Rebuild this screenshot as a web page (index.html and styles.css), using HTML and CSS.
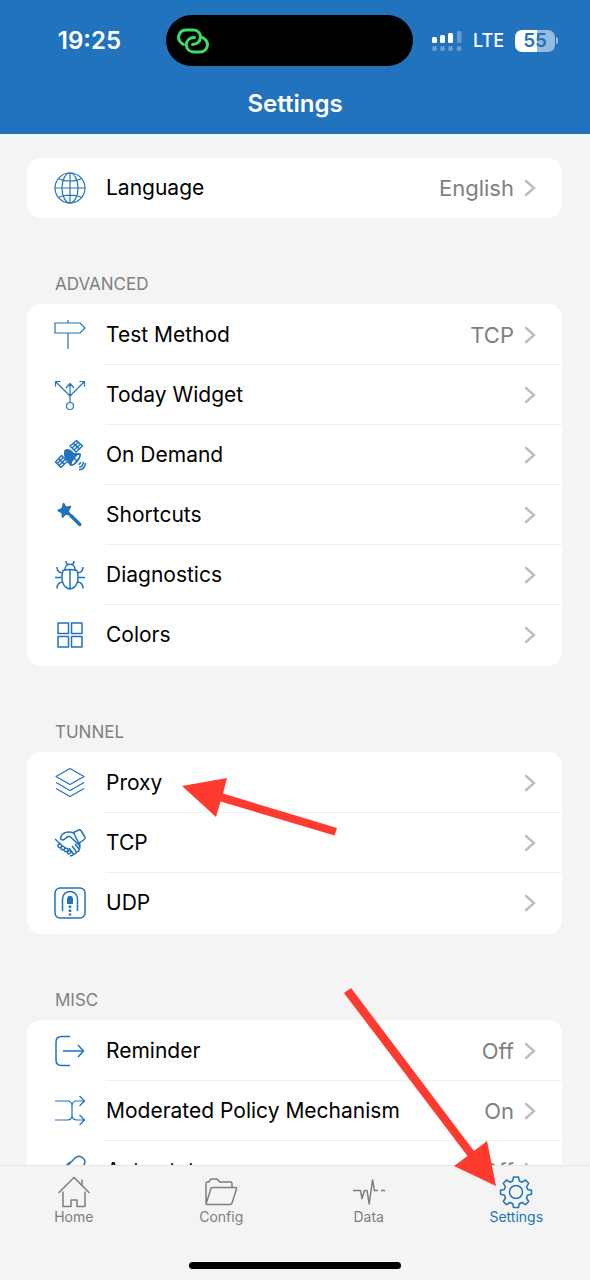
FILE: index.html
```html
<!DOCTYPE html>
<html lang="en">
<head>
<meta charset="utf-8">
<meta name="viewport" content="width=device-width, initial-scale=1">
<title>Settings</title>
<link rel="stylesheet" href="styles.css">
</head>
<body>
<svg class="defs" aria-hidden="true">
  <symbol id="chevron" viewBox="0 0 12 18"><path d="M2 2l8 7-8 7"/></symbol>
</svg>
<div class="app">
  <header class="header">
    <div class="status">
      <span class="time">19:25</span>
      <div class="island">
        <svg class="link-icon" viewBox="0 0 32 26"><path d="M6.500 16.500C2.500 14 0.500 10.500 2.200 6.500C3.500 3 6.500 2 9.500 2H16C20.500 2 23.500 5 23.500 9C23.500 13.500 20 16.500 15.500 16.500"/><path d="M25.500 9.500C29.500 12 31.500 15.500 29.800 19.500C28.500 23 25.500 24 22.500 24H17C12.500 24 9.300 21 9.300 17C9.300 12.500 12.500 9.500 17.500 9.500"/></svg>
      </div>
      <div class="signals">
        <svg class="bars" viewBox="0 0 30 22"><g fill="#fff"><rect x="0" y="7" width="5" height="6" rx="1.500"/><rect x="8" y="5" width="5" height="8" rx="1.500"/><rect x="16" y="3" width="5" height="10" rx="1.500"/></g><g fill="#fff" opacity=".3"><rect x="25" y="1" width="4.500" height="12" rx="1.500"/><circle cx="2.500" cy="18.500" r="2.500"/><circle cx="10.500" cy="18.500" r="2.500"/><circle cx="18.500" cy="18.500" r="2.500"/><circle cx="27" cy="18.500" r="2.500"/></g></svg>
        <span class="network">LTE</span>
        <span class="battery"><span class="battery-level">55</span></span>
      </div>
    </div>
    <h1 class="title">Settings</h1>
  </header>

  <main class="content">
    <ul class="card card-single">
      <li class="row"><a class="row-link" href="#">
        <svg class="icon thin" viewBox="0 0 32 32"><circle cx="16" cy="16" r="15"/><ellipse cx="16" cy="16" rx="8" ry="15"/><path d="M16 1v30M1 16h30M4.500 6.500C10 9.800 22 9.800 27.500 6.500M4.500 25.500C10 22.200 22 22.200 27.500 25.500"/></svg>
        <span class="row-body"><span class="label">Language</span><span class="value">English</span><svg class="chevron"><use href="#chevron"/></svg></span></a></li>
    </ul>

    <h2 class="section-title">ADVANCED</h2>
    <ul class="card">
      <li class="row"><a class="row-link" href="#">
        <svg class="icon thin" viewBox="0 0 32 32"><path d="M1 4h25l5 5-5 5H1zM14 1v3M14 14v16"/></svg>
        <span class="row-body"><span class="label">Test Method</span><span class="value">TCP</span><svg class="chevron"><use href="#chevron"/></svg></span></a></li>
      <li class="row"><a class="row-link" href="#">
        <svg class="icon thin" viewBox="0 0 32 32"><path d="M16 23V5M12 9l4-4.500L20 9M16 17L1.500 2.500M1.500 7.500v-5h5M16 17L30.500 2.500M25.500 2.500h5v5"/><circle cx="16" cy="27" r="3.500"/></svg>
        <span class="row-body"><span class="label">Today Widget</span><svg class="chevron"><use href="#chevron"/></svg></span></a></li>
      <li class="row"><a class="row-link" href="#">
        <svg class="icon" viewBox="0 0 32 32"><path d="M16 7l6.500-5.500 6 5.500-6.500 6zM19.300 4.300l6 5.600M18 9l6-5.800M20 11l6.400-6M1.500 23l6-6.500 6 5.500-6.500 6.500zM4.500 19.700l6 5.600M3.300 24.800l6-6.500M5.200 26.500l6.300-6.500"/><path d="M10.500 11C14 8.500 17.500 11 20 14L26.800 14.300C27.500 19.500 22.500 26.500 16.500 27C12 22 8.500 16.500 10.500 11z" fill="currentColor" stroke="none"/><ellipse cx="21.500" cy="20.500" rx="2" ry="6.500" transform="rotate(38 21.500 20.500)" fill="#fff"/><path d="M20 19l3 3M24.500 25.500q2-.5 2-2.500M25 28.300q4-.5 4.300-5.300M25 30.800q6-.5 6.300-6.800"/></svg>
        <span class="row-body"><span class="label">On Demand</span><svg class="chevron"><use href="#chevron"/></svg></span></a></li>
      <li class="row"><a class="row-link" href="#">
        <svg class="icon" viewBox="0 0 32 32"><path d="M9.500 4.500l2.500 4 4.500-1-2.300 4.500 2.300 4-4.800-1-3.200 3.200-.5-4.700-4-2 4.200-2z" fill="currentColor"/><path d="M16.800 16.500l9 9" stroke-width="3.500" stroke-linecap="round"/></svg>
        <span class="row-body"><span class="label">Shortcuts</span><svg class="chevron"><use href="#chevron"/></svg></span></a></li>
      <li class="row"><a class="row-link" href="#">
        <svg class="icon" viewBox="0 0 32 32"><path d="M11 10.500C11 3.500 21 3.500 21 10.500M9 11.500Q16 9.500 23 11.500C25.500 20 23.500 29 16 30C8.500 29 6.500 20 9 11.500zM16 11v19M12 2q0 3.500 2.500 3.500M20 2q0 3.500-2.500 3.500M8.500 14Q3 13.500 3 8M23.500 14Q29 13.500 29 8M1 18.500h6.500M24.500 18.500H31M8.500 23Q3 23.500 3 29.500M23.500 23Q29 23.500 29 29.500"/></svg>
        <span class="row-body"><span class="label">Diagnostics</span><svg class="chevron"><use href="#chevron"/></svg></span></a></li>
      <li class="row"><a class="row-link" href="#">
        <svg class="icon" viewBox="0 0 32 32"><path d="M4 4h10.500v10.500H4zM17.500 4H28v10.500H17.500zM4 17.500h10.500V28H4zM17.500 17.500H28V28H17.500z"/></svg>
        <span class="row-body"><span class="label">Colors</span><svg class="chevron"><use href="#chevron"/></svg></span></a></li>
    </ul>

    <h2 class="section-title">TUNNEL</h2>
    <ul class="card">
      <li class="row"><a class="row-link" href="#">
        <svg class="icon thin" viewBox="0 0 32 32"><path d="M16 1.500l14 8-14 8-14-8zM2 15.500l14 8 14-8M2 21.500l14 8 14-8"/></svg>
        <span class="row-body"><span class="label">Proxy</span><svg class="chevron"><use href="#chevron"/></svg></span></a>
        <svg class="arrow arrow-proxy" viewBox="0 0 156 58"><path d="M0 8L45 0l-4 15.500 114 34.500-2.500 7.500L38.500 23.500 34 39z"/></svg>
      </li>
      <li class="row"><a class="row-link" href="#">
        <svg class="icon" viewBox="0 0 32 32"><path d="M19.500 5.500l2-1 3.500-1.500q1.500-.5 2.300 1l3.500 6q.7 1.500-.6 2.500L26 15.500q-1.300.6-2-.7zM19.500 6Q16 4.500 11.500 5.500Q6.500 7.500 6.500 12Q9 14 11.500 11.500Q13 9 16 9.500L25.500 18.500M25 15.500Q27 18.500 25 20M1 12l5.500 5M5.500 17q-2.500 1-1 3 1.500 1.500 3-.5.5-2.500-2-2.500zM8.500 19q-2.500 1.500-1 3.500 2 1 3-1 .5-2-2-2.500zM11.500 21q-2.500 2-.5 3.500 2 .8 3-1.500 0-2-2.500-2zM14.500 24q-2 2 0 3 1.500 0 2.500-2 0-1.500-2.500-1zM16 28.500q2.500 1 3.500-1.500 2.500.5 3-2 3-.5 2.500-3 1.500-1.200.5-3M15 21l4.500 6M18 19l4.500 6M21 17l4 5"/></svg>
        <span class="row-body"><span class="label">TCP</span><svg class="chevron"><use href="#chevron"/></svg></span></a></li>
      <li class="row"><a class="row-link" href="#">
        <svg class="icon" viewBox="0 0 32 32"><rect x="1" y="1" width="30" height="30" rx="5"/><path d="M8.500 24V12C8.500 2 23.500 2 23.500 12V24"/><path d="M13 17v-5C13 7.500 19 7.500 19 12v5z" fill="currentColor" stroke="none"/><path d="M16 18.500v10" stroke-width="2.500" stroke-dasharray="2.500 1.500"/></svg>
        <span class="row-body"><span class="label">UDP</span><svg class="chevron"><use href="#chevron"/></svg></span></a></li>
    </ul>

    <h2 class="section-title">MISC</h2>
    <ul class="card">
      <li class="row"><a class="row-link" href="#">
        <svg class="icon" viewBox="0 0 32 32"><path d="M16 1.500H7.500Q2 1.500 2 7v18q0 5.500 5.500 5.500H16M9 16h20.500M24 10l5.500 6-5.500 6"/></svg>
        <span class="row-body"><span class="label">Reminder</span><span class="value">Off</span><svg class="chevron"><use href="#chevron"/></svg></span></a></li>
      <li class="row"><a class="row-link" href="#">
        <svg class="icon thin" viewBox="0 0 32 32"><path d="M1 6h12.500q4.500 0 4.500 5v9q0 5-4.500 5H1M30.500 6H23q-5 0-5 5v9q0 5 5 5h7.500M25.500 1l5 5-5 5M25.500 20l5 5-5 5"/></svg>
        <span class="row-body"><span class="label">Moderated Policy Mechanism</span><span class="value">On</span><svg class="chevron"><use href="#chevron"/></svg></span></a></li>
      <li class="row"><a class="row-link" href="#">
        <svg class="icon" viewBox="0 0 32 32"><path d="M8 16.500L21 3Q25 -.5 29 3t0 8L14 27q-5 4-9.500 0t0-9L16 7"/></svg>
        <span class="row-body"><span class="label">Auto state</span><span class="value">Off</span><svg class="chevron"><use href="#chevron"/></svg></span></a></li>
    </ul>
  </main>

  <footer class="footer">
    <nav class="tabs">
      <a class="tab" href="#"><svg class="tab-icon" viewBox="0 0 32 32"><path d="M0.500 17L16 1.500 31.500 17M5 15.500V30.500H13V24h6v6.500h8V15.500M24 9V3.500"/></svg>Home</a>
      <a class="tab" href="#"><svg class="tab-icon" viewBox="0 0 32 32"><path d="M1 28V7.500q0-1.500 1.500-1.500H4q1-3 3-3h4q2 0 3.500 3h11Q27 6 27 7.500V11M1 28L6 12.500Q6.500 11.500 8 11.500h22.500q1.500 0 1 1.500l-4.500 14q-.5 1.500-2 1.500H2.500Q1 28.500 1 28z"/></svg>Config</a>
      <a class="tab" href="#"><svg class="tab-icon" viewBox="0 0 32 32"><path d="M0 14.500h7.500l1.500 8 2.500-8H14l2.200 13.500L19.500 4l2 10.500H25M28 14.500h4"/></svg>Data</a>
      <a class="tab tab-active" href="#" aria-current="page"><svg class="tab-icon" viewBox="0 0 32 32"><circle cx="16" cy="16" r="6.500"/><path d="M13.500 1h5l.8 4 2.700 1.200 3.500-2.200 3.200 3.300-2.200 3.500 1.200 2.700 3.800.8v4l-3.800.8-1.200 2.900 2.200 3.500-3.200 3.200-3.500-2.200-2.700 1.200-.8 3.800h-5l-.8-3.800-2.700-1.200-3.500 2.200-3.200-3.200 2.200-3.500L4.300 19.100.5 18.300v-4l3.800-.8 1.200-2.700-2.200-3.500L6.500 4 10 6.200 12.700 5z"/></svg>Settings</a>
    </nav>
    <div class="home-indicator"></div>
    <svg class="arrow arrow-settings" viewBox="0 0 152 198"><path d="M7 0L130 163l13-10 9 45-42-20 13.500-10L0 5z"/></svg>
  </footer>
</div>
</body>
</html>
```
FILE: styles.css
```css
* { box-sizing: border-box; }

body {
  margin: 0;
  background: #f4f4f4;
  color: #000;
  font-family: Inter, "Liberation Sans", sans-serif;
}

a { color: inherit; text-decoration: none; }

.defs { display: none; }

.app {
  display: flex;
  flex-direction: column;
  height: 100vh;
}

.header {
  flex: none;
  padding-top: 15px;
  background: #2273bd;
  color: #fff;
}

.status {
  display: grid;
  grid-template-columns: 1fr 247px 1fr;
  align-items: center;
  padding-right: 11px;
}

.time {
  padding-right: 45px;
  font-size: 24px;
  font-weight: 600;
  line-height: 28px;
  text-align: right;
}

.island {
  display: flex;
  align-items: center;
  height: 51px;
  padding-left: 11px;
  border-radius: 26px;
  background: #000;
}

.link-icon {
  width: 32px;
  height: 26px;
  fill: none;
  stroke: #3ddc64;
  stroke-width: 3;
  stroke-linecap: round;
}

.signals {
  display: flex;
  align-items: center;
  gap: 11px;
  padding-left: 19px;
}

.bars { flex: none; width: 30px; height: 22px; }

.network { font-size: 18px; font-weight: 500; line-height: 24px; }

.battery {
  position: relative;
  flex: none;
  width: 40px;
  height: 22px;
  border-radius: 7px;
  background: linear-gradient(to right, #fff 55%, #95bce0 55%);
  color: #2273bd;
  text-align: center;
}

.battery::after {
  content: "";
  position: absolute;
  top: 7px;
  right: -3px;
  width: 2px;
  height: 7px;
  border-radius: 0 2px 2px 0;
  background: #95bce0;
}

.battery-level { display: block; font-size: 19px; font-weight: 600; line-height: 22px; }

.title {
  margin: 0;
  padding: 23px 0 15px;
  font-size: 24px;
  font-weight: 600;
  line-height: 30px;
  text-align: center;
}

.content {
  flex: 1;
  min-height: 0;
  overflow: hidden;
  padding: 24px 28px 0 27px;
}

.card {
  margin: 0;
  padding: 1px 0;
  border-radius: 14px;
  background: #fff;
  list-style: none;
}

.card-single { padding: 0; }

.row { position: relative; }

.row-link {
  display: flex;
  align-items: center;
  gap: 20px;
  height: 60px;
  padding-left: 27px;
}

.row-body {
  display: flex;
  flex: 1;
  align-items: center;
  gap: 10px;
  height: 100%;
  padding-right: 26px;
  border-bottom: 1px solid #f0f0f0;
}

.row:last-child .row-body { border-bottom-color: transparent; }

.icon {
  flex: none;
  width: 32px;
  height: 32px;
  color: #2273bd;
  fill: none;
  stroke: currentColor;
  stroke-width: 1.5;
  stroke-linejoin: round;
}

.thin { stroke-width: 1.2; }

.label { flex: 1; font-size: 21px; line-height: 28px; }

.value { color: #808080; font-size: 22px; line-height: 28px; }

.chevron {
  flex: none;
  width: 12px;
  height: 18px;
  fill: none;
  stroke: #bdbdbd;
  stroke-width: 2.4;
  stroke-linecap: round;
}

.section-title {
  margin: 0;
  padding: 56px 28px 10px;
  color: #808080;
  font-size: 17px;
  font-weight: 400;
  line-height: 20px;
}

.footer {
  position: relative;
  flex: none;
  padding-bottom: 11px;
  border-top: 1px solid #e6e6e6;
  background: #f4f4f4;
}

.tabs { display: flex; padding-top: 10px; }

.tab {
  display: flex;
  flex: 1;
  flex-direction: column;
  align-items: center;
  color: #7e7e7e;
  font-size: 14px;
  line-height: 18px;
}

.tab-active { color: #2273bd; }

.tab-icon {
  width: 32px;
  height: 32px;
  fill: none;
  stroke: currentColor;
  stroke-width: 1.5;
  stroke-linejoin: round;
  overflow: visible;
}

.home-indicator {
  width: 212px;
  height: 7px;
  margin: 36px auto 0;
  border-radius: 4px;
  background: #000;
}

.arrow { position: absolute; z-index: 1; fill: #ff3b2f; pointer-events: none; }

.arrow-proxy { top: 25px; left: 155px; width: 156px; height: 58px; }

.arrow-settings { right: 94px; bottom: 94px; width: 152px; height: 198px; }
```
